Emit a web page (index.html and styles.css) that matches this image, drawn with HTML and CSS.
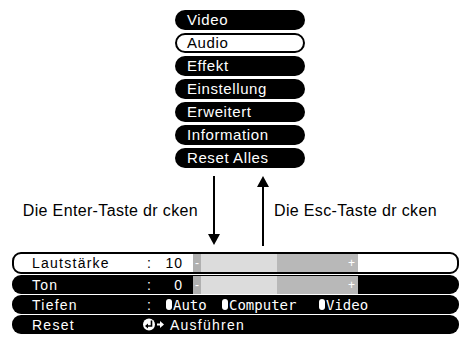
FILE: index.html
```html
<!DOCTYPE html>
<html lang="de">
<head>
  <meta charset="UTF-8" />
  <title>Audio Menü</title>
  <link rel="stylesheet" href="styles.css">
</head>
<body>

  <!-- Hauptmenü -->
  <ul class="menu">
    <li class="pill">Video</li>
    <li class="pill active">Audio</li>
    <li class="pill">Effekt</li>
    <li class="pill">Einstellung</li>
    <li class="pill">Erweitert</li>
    <li class="pill">Information</li>
    <li class="pill">Reset Alles</li>
  </ul>

  <!-- Tasten -->
  <div class="keys">
    <span class="hint hint-left">Die Enter-Taste dr cken</span>
    <svg class="arrow down" width="14" height="70" viewBox="0 0 14 70">
      <rect x="6" y="0" width="2" height="60" fill="#000"/>
      <polygon points="1,58 13,58 7,69" fill="#000"/>
    </svg>
    <svg class="arrow up" width="14" height="70" viewBox="0 0 14 70">
      <polygon points="1,11 13,11 7,0" fill="#000"/>
      <rect x="6" y="9" width="2" height="61" fill="#000"/>
    </svg>
    <span class="hint hint-right">Die Esc-Taste dr cken</span>
  </div>

  <!-- Untermenü Audio -->
  <div class="rows">
    <div class="row active">
      <span class="label">Lautstärke</span>
      <span class="colon">:</span>
      <span class="value">10</span>
      <div class="slider">
        <span class="minus">-</span>
        <span class="light"></span>
        <span class="dark">+</span>
      </div>
    </div>
    <div class="row">
      <span class="label">Ton</span>
      <span class="colon">:</span>
      <span class="value">0</span>
      <div class="slider">
        <span class="minus">-</span>
        <span class="light"></span>
        <span class="dark">+</span>
      </div>
    </div>
    <div class="row">
      <span class="label">Tiefen</span>
      <span class="colon">:</span>
      <div class="options">
        <span class="opt opt-auto"><i class="dot"></i>Auto</span>
        <span class="opt opt-pc"><i class="dot"></i>Computer</span>
        <span class="opt"><i class="dot"></i>Video</span>
      </div>
    </div>
    <div class="row">
      <span class="label label-reset">Reset</span>
      <svg class="enter" width="22" height="13" viewBox="0 0 22 13">
        <circle cx="6" cy="6.5" r="6" fill="#fff"/>
        <path d="M8.5 2.5 V8 H4.5" stroke="#000" stroke-width="1.6" fill="none"/>
        <polygon points="2,8 5,5.5 5,10.5" fill="#000"/>
        <rect x="14" y="5.5" width="4" height="2" fill="#fff"/>
        <polygon points="17,3 21,6.5 17,10" fill="#fff"/>
      </svg>
      <span class="run">Ausführen</span>
    </div>
  </div>

</body>
</html>
```

FILE: styles.css
```css
body {
  margin: 0;
  background: #fff;
  font-family: "Liberation Sans", Arial, sans-serif;
  color: #000;
  width: 460px;
  height: 343px;
  overflow: hidden;
}

/* Hauptmenü */
.menu {
  list-style: none;
  margin: 0;
  padding: 10px 0 0 175px;
  display: flex;
  flex-direction: column;
  gap: 3px;
}
.pill {
  box-sizing: border-box;
  width: 130px;
  height: 20px;
  line-height: 20px;
  padding-left: 12px;
  border-radius: 10px;
  background: #000;
  color: #fff;
  font-size: 15px;
  letter-spacing: 0.6px;
}
.pill.active {
  background: #fff;
  color: #000;
  border: 2px solid #000;
  line-height: 16px;
  padding-left: 10px;
}

/* Tasten */
.keys {
  display: flex;
  align-items: center;
  height: 78px;
  margin-top: 4px;
}
.hint {
  font-size: 16px;
  letter-spacing: 0.35px;
  white-space: pre;
}
.hint-left {
  width: 198px;
  text-align: right;
}
.arrow.down { margin-left: 9px; }
.arrow.up { margin-left: 35px; }
.hint-right { margin-left: 4px; }

/* Untermenü */
.rows {
  display: flex;
  flex-direction: column;
  gap: 1px;
  margin: 2px 0 0 12px;
}
.row {
  box-sizing: border-box;
  display: flex;
  align-items: center;
  width: 447px;
  height: 19px;
  padding-left: 20px;
  border-radius: 9px;
  background: #000;
  color: #fff;
  font-size: 14px;
  letter-spacing: 1.25px;
}
.row.active {
  height: 22px;
  background: #fff;
  color: #000;
  border: 2px solid #000;
  padding-left: 18px;
}
.label { width: 115px; }
.label-reset { width: 111px; }
.colon { width: 12px; }
.value {
  width: 24px;
  text-align: right;
  letter-spacing: 1px;
}
.slider {
  display: flex;
  height: 18px;
  margin-left: 10px;
  font-size: 12px;
  letter-spacing: 0;
  color: #fff;
  line-height: 18px;
}
.minus {
  width: 8px;
  background: #b0b0b0;
  text-align: center;
}
.light {
  width: 76px;
  background: #dcdcdc;
}
.dark {
  width: 81px;
  background: #b8b8b8;
  text-align: right;
  padding-right: 3px;
  box-sizing: border-box;
}

.options {
  display: flex;
  margin-left: 7px;
  font-family: "DejaVu Sans Mono", monospace;
  font-size: 14px;
  letter-spacing: 0;
}
.opt {
  display: flex;
  align-items: center;
}
.opt-auto { width: 56px; }
.opt-pc { width: 97px; }
.dot {
  display: inline-block;
  width: 6px;
  height: 11px;
  border-radius: 3px;
  background: #fff;
  margin-right: 1px;
}
.run { margin-left: 5px; }
```
